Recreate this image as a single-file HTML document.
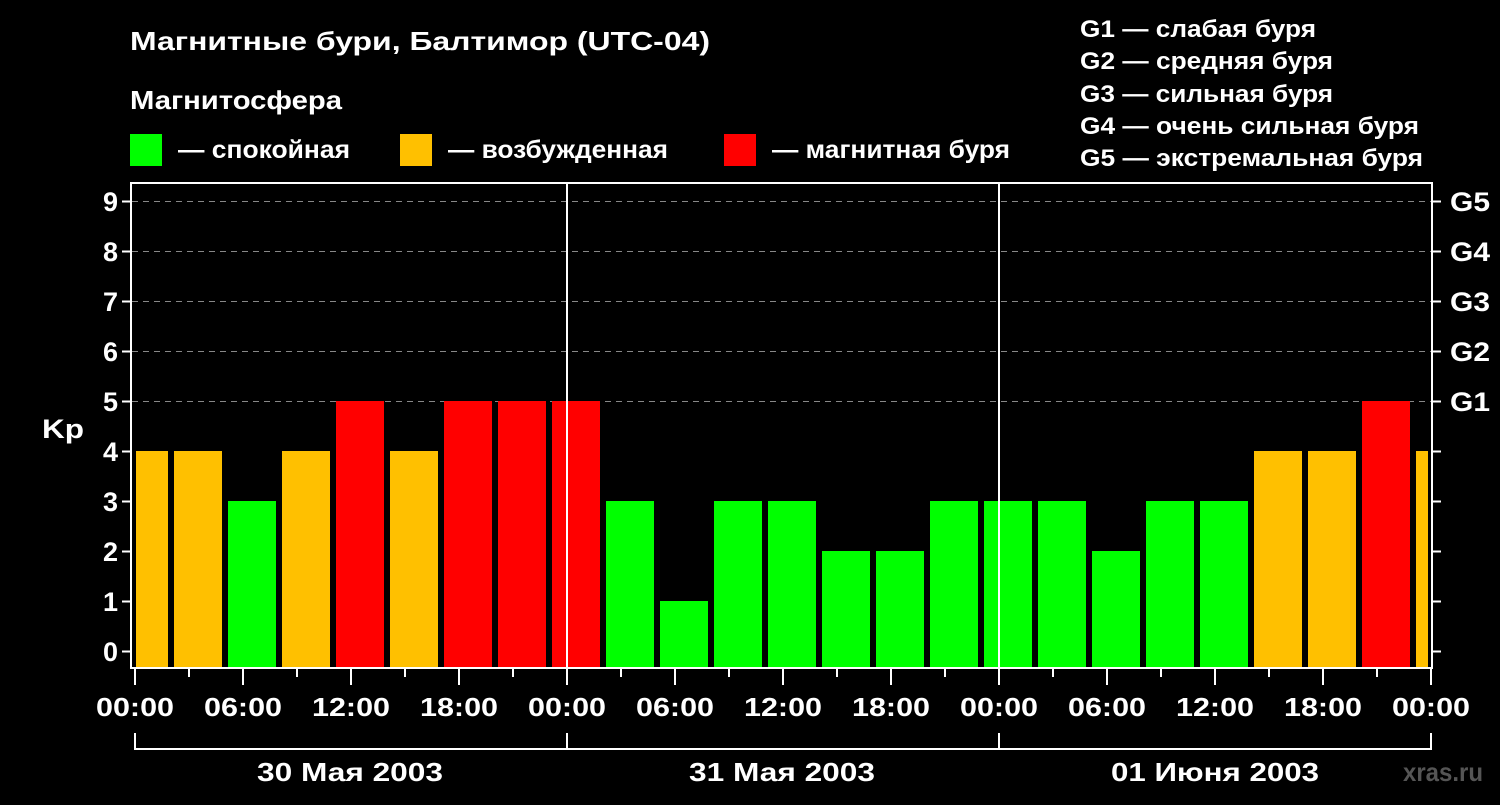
<!DOCTYPE html>
<html><head><meta charset="utf-8"><style>
body{margin:0;background:#000;width:1500px;height:800px;overflow:hidden}
svg text{font-family:"Liberation Sans",sans-serif;font-weight:bold;fill:#fff}
</style></head><body>
<svg width="1500" height="800" viewBox="0 0 1500 800" xmlns="http://www.w3.org/2000/svg">
<g lengthAdjust="spacingAndGlyphs">
<text x="130" y="50" font-size="26" textLength="580" lengthAdjust="spacingAndGlyphs">Магнитные бури, Балтимор (UTC-04)</text>
<text x="130" y="109" font-size="26" textLength="212" lengthAdjust="spacingAndGlyphs">Магнитосфера</text>
<rect x="130" y="134" width="32" height="32" fill="#00ff00"/>
<text x="178" y="158" font-size="25" textLength="172" lengthAdjust="spacingAndGlyphs">— спокойная</text>
<rect x="400" y="134" width="32" height="32" fill="#ffc000"/>
<text x="448" y="158" font-size="25" textLength="220" lengthAdjust="spacingAndGlyphs">— возбужденная</text>
<rect x="724" y="134" width="32" height="32" fill="#ff0000"/>
<text x="772" y="158" font-size="25" textLength="238" lengthAdjust="spacingAndGlyphs">— магнитная буря</text>
<g font-size="24">
<text x="1080" y="37" textLength="236" lengthAdjust="spacingAndGlyphs">G1 — слабая буря</text>
<text x="1080" y="69" textLength="253" lengthAdjust="spacingAndGlyphs">G2 — средняя буря</text>
<text x="1080" y="102" textLength="253" lengthAdjust="spacingAndGlyphs">G3 — сильная буря</text>
<text x="1080" y="134" textLength="339" lengthAdjust="spacingAndGlyphs">G4 — очень сильная буря</text>
<text x="1080" y="166" textLength="343" lengthAdjust="spacingAndGlyphs">G5 — экстремальная буря</text>
</g>
</g>
<g stroke="#888" stroke-width="1" stroke-dasharray="6,5">
<line x1="132" y1="201.5" x2="1431" y2="201.5"/>
<line x1="132" y1="251.5" x2="1431" y2="251.5"/>
<line x1="132" y1="301.5" x2="1431" y2="301.5"/>
<line x1="132" y1="351.5" x2="1431" y2="351.5"/>
<line x1="132" y1="401.5" x2="1431" y2="401.5"/>
</g>
<g id="bars">
<rect x="136" y="451" width="32" height="217" fill="#ffc000"/>
<rect x="174" y="451" width="48" height="217" fill="#ffc000"/>
<rect x="228" y="501" width="48" height="167" fill="#00ff00"/>
<rect x="282" y="451" width="48" height="217" fill="#ffc000"/>
<rect x="336" y="401" width="48" height="267" fill="#ff0000"/>
<rect x="390" y="451" width="48" height="217" fill="#ffc000"/>
<rect x="444" y="401" width="48" height="267" fill="#ff0000"/>
<rect x="498" y="401" width="48" height="267" fill="#ff0000"/>
<rect x="552" y="401" width="48" height="267" fill="#ff0000"/>
<rect x="606" y="501" width="48" height="167" fill="#00ff00"/>
<rect x="660" y="601" width="48" height="67" fill="#00ff00"/>
<rect x="714" y="501" width="48" height="167" fill="#00ff00"/>
<rect x="768" y="501" width="48" height="167" fill="#00ff00"/>
<rect x="822" y="551" width="48" height="117" fill="#00ff00"/>
<rect x="876" y="551" width="48" height="117" fill="#00ff00"/>
<rect x="930" y="501" width="48" height="167" fill="#00ff00"/>
<rect x="984" y="501" width="48" height="167" fill="#00ff00"/>
<rect x="1038" y="501" width="48" height="167" fill="#00ff00"/>
<rect x="1092" y="551" width="48" height="117" fill="#00ff00"/>
<rect x="1146" y="501" width="48" height="167" fill="#00ff00"/>
<rect x="1200" y="501" width="48" height="167" fill="#00ff00"/>
<rect x="1254" y="451" width="48" height="217" fill="#ffc000"/>
<rect x="1308" y="451" width="48" height="217" fill="#ffc000"/>
<rect x="1362" y="401" width="48" height="267" fill="#ff0000"/>
<rect x="1416" y="451" width="12" height="217" fill="#ffc000"/>
</g>
<g stroke="#fff" stroke-width="2" fill="none">
<rect x="131" y="183" width="1301" height="485"/>
<line x1="567" y1="183" x2="567" y2="668"/>
<line x1="999" y1="183" x2="999" y2="668"/>
<path d="M122 201.5h9M122 251.5h9M122 301.5h9M122 351.5h9M122 401.5h9M122 451.5h9M122 501.5h9M122 551.5h9M122 601.5h9M122 651.5h9"/>
<path d="M1432 201.5h9M1432 251.5h9M1432 301.5h9M1432 351.5h9M1432 401.5h9M1432 451.5h9M1432 501.5h9M1432 551.5h9M1432 601.5h9M1432 651.5h9"/>
<path d="M135 668v17M189 668v9M243 668v17M297 668v9M351 668v17M405 668v9M459 668v17M513 668v9M567 668v17M621 668v9M675 668v17M729 668v9M783 668v17M837 668v9M891 668v17M945 668v9M999 668v17M1053 668v9M1107 668v17M1161 668v9M1215 668v17M1269 668v9M1323 668v17M1377 668v9M1431 668v17"/>
<path d="M135 733v16h1296v-16M567 733v16M999 733v16"/>
</g>
<g font-size="27" text-anchor="end">
<text x="118" y="211">9</text><text x="118" y="261">8</text><text x="118" y="311">7</text><text x="118" y="361">6</text><text x="118" y="411">5</text><text x="118" y="461">4</text><text x="118" y="511">3</text><text x="118" y="561">2</text><text x="118" y="611">1</text><text x="118" y="661">0</text>
</g>
<text x="42" y="438" font-size="27" textLength="42" lengthAdjust="spacingAndGlyphs">Kp</text>
<g font-size="27">
<text x="1450" y="211" textLength="40" lengthAdjust="spacingAndGlyphs">G5</text><text x="1450" y="261" textLength="40" lengthAdjust="spacingAndGlyphs">G4</text><text x="1450" y="311" textLength="40" lengthAdjust="spacingAndGlyphs">G3</text><text x="1450" y="361" textLength="40" lengthAdjust="spacingAndGlyphs">G2</text><text x="1450" y="411" textLength="40" lengthAdjust="spacingAndGlyphs">G1</text>
</g>
<g font-size="26">
<text x="96" y="716" textLength="78" lengthAdjust="spacingAndGlyphs">00:00</text>
<text x="204" y="716" textLength="78" lengthAdjust="spacingAndGlyphs">06:00</text>
<text x="312" y="716" textLength="78" lengthAdjust="spacingAndGlyphs">12:00</text>
<text x="420" y="716" textLength="78" lengthAdjust="spacingAndGlyphs">18:00</text>
<text x="528" y="716" textLength="78" lengthAdjust="spacingAndGlyphs">00:00</text>
<text x="636" y="716" textLength="78" lengthAdjust="spacingAndGlyphs">06:00</text>
<text x="744" y="716" textLength="78" lengthAdjust="spacingAndGlyphs">12:00</text>
<text x="852" y="716" textLength="78" lengthAdjust="spacingAndGlyphs">18:00</text>
<text x="960" y="716" textLength="78" lengthAdjust="spacingAndGlyphs">00:00</text>
<text x="1068" y="716" textLength="78" lengthAdjust="spacingAndGlyphs">06:00</text>
<text x="1176" y="716" textLength="78" lengthAdjust="spacingAndGlyphs">12:00</text>
<text x="1284" y="716" textLength="78" lengthAdjust="spacingAndGlyphs">18:00</text>
<text x="1392" y="716" textLength="78" lengthAdjust="spacingAndGlyphs">00:00</text>
<text x="257" y="781" textLength="186" lengthAdjust="spacingAndGlyphs">30 Мая 2003</text>
<text x="689" y="781" textLength="186" lengthAdjust="spacingAndGlyphs">31 Мая 2003</text>
<text x="1111" y="781" textLength="208" lengthAdjust="spacingAndGlyphs">01 Июня 2003</text>
</g>
<text x="1403" y="781" font-size="26" textLength="80" lengthAdjust="spacingAndGlyphs" style="fill:#555">xras.ru</text>
</svg>
</body></html>
